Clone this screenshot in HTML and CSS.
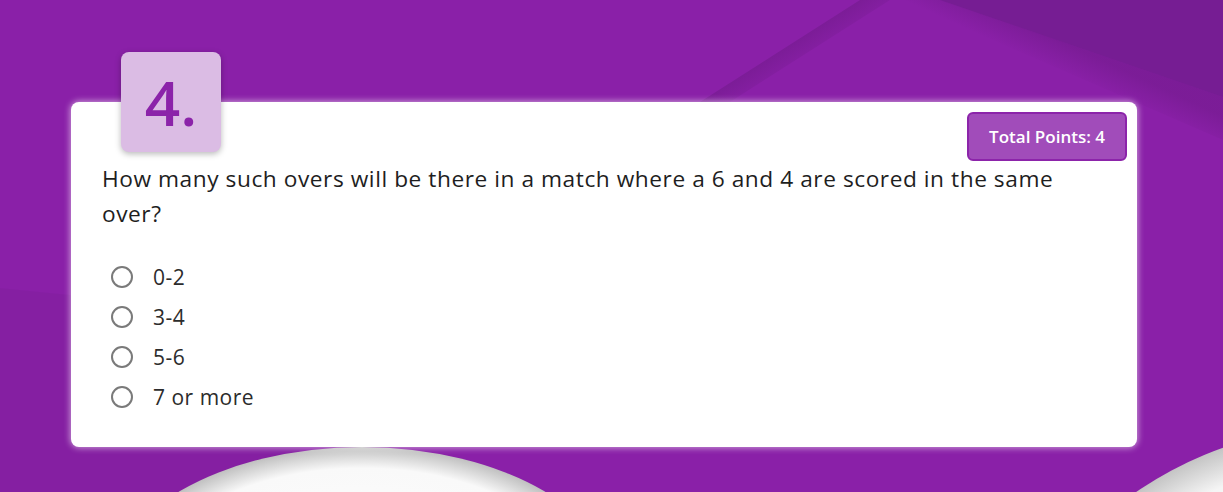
FILE: index.html
```html
<!DOCTYPE html>
<html lang="en">
<head>
<meta charset="utf-8">
<title>Quiz question</title>
<link rel="stylesheet" href="styles.css">
</head>
<body>
<svg class="bg" width="1223" height="492" viewBox="0 0 1223 492" aria-hidden="true">
  <defs>
    <linearGradient id="edgeShade" gradientUnits="userSpaceOnUse" x1="780" y1="51" x2="796" y2="76">
      <stop offset="0" stop-color="#5a1470" stop-opacity="0.3"/>
      <stop offset="1" stop-color="#5a1470" stop-opacity="0"/>
    </linearGradient>
    <linearGradient id="rightEdge" gradientUnits="userSpaceOnUse" x1="1080" y1="50" x2="1068" y2="76">
      <stop offset="0" stop-color="#5a1470" stop-opacity="0.3"/>
      <stop offset="1" stop-color="#5a1470" stop-opacity="0"/>
    </linearGradient>
    <radialGradient id="hill" cx="0.5" cy="0.5" r="0.5">
      <stop offset="0" stop-color="#ffffff"/>
      <stop offset="0.86" stop-color="#f9f9f9"/>
      <stop offset="1" stop-color="#c0c0c0"/>
    </radialGradient>
    <radialGradient id="hill2" cx="0.5" cy="0.5" r="0.5">
      <stop offset="0" stop-color="#ffffff"/>
      <stop offset="0.9" stop-color="#f5f5f5"/>
      <stop offset="1" stop-color="#c4c4c4"/>
    </radialGradient>
  </defs>
  <polygon points="700,102 860,0 890,0 730,102" fill="url(#edgeShade)"/>
  <polygon points="940,0 1223,0 1223,97" fill="#761d93"/>
  <polygon points="940,0 1223,97 1223,140 900,0" fill="url(#rightEdge)"/>
  <polygon points="0,288 300,318 300,492 0,492" fill="#000" opacity="0.03"/>
  <ellipse cx="362" cy="598" rx="258" ry="151" fill="url(#hill)"/>
  <circle cx="1345" cy="795" r="368" fill="url(#hill2)"/>
</svg>

<main class="card">
  <div class="card-head">
    <div class="qnum">4.</div>
    <div class="points">Total Points: 4</div>
  </div>
  <p class="question">How many such overs will be there in a match where a 6 and 4 are scored in the same over?</p>
  <ul class="options">
    <li class="option"><span class="radio"></span><span class="label">0-2</span></li>
    <li class="option"><span class="radio"></span><span class="label">3-4</span></li>
    <li class="option"><span class="radio"></span><span class="label">5-6</span></li>
    <li class="option"><span class="radio"></span><span class="label">7 or more</span></li>
  </ul>
</main>
</body>
</html>
```

FILE: styles.css
```css
html, body {
  margin: 0;
  padding: 0;
}

body {
  width: 1223px;
  height: 492px;
  overflow: hidden;
  background: #8a20a8;
  font-family: "Open Sans", "Noto Sans", sans-serif;
  position: relative;
  padding-top: 102px;
  box-sizing: border-box;
}

.bg {
  position: absolute;
  left: 0;
  top: 0;
  z-index: 0;
}

.card {
  position: relative;
  z-index: 1;
  margin-left: 71px;
  width: 1066px;
  height: 345px;
  box-sizing: border-box;
  padding: 10px 10px 0 31px;
  background: #ffffff;
  border-radius: 8px;
  box-shadow: 0 0 6px 1px rgba(255, 255, 255, 0.55);
}

.card-head {
  display: flex;
  justify-content: space-between;
  align-items: flex-start;
}

.qnum {
  width: 100px;
  height: 100px;
  margin-top: -60px;
  margin-left: 19px;
  border-radius: 8px;
  background: #dbbce4;
  color: #8b23a9;
  font-size: 62px;
  font-weight: 600;
  line-height: 100px;
  text-align: center;
  box-shadow: 0 2px 6px rgba(0, 0, 0, 0.28);
}

.points {
  height: 49px;
  box-sizing: border-box;
  padding: 0 20px;
  display: flex;
  align-items: center;
  background: #a14cba;
  border: 2px solid #8c24aa;
  border-radius: 6px;
  color: #ffffff;
  font-size: 17px;
  font-weight: 600;
}

.question {
  margin: 0;
  padding-right: 30px;
  font-size: 22.7px;
  letter-spacing: 0.55px;
  line-height: 35px;
  color: #1e1e1e;
}

.options {
  list-style: none;
  margin: 26px 0 0 0;
  padding: 0 0 0 9px;
}

.option {
  display: flex;
  align-items: center;
  height: 40px;
  gap: 20px;
}

.radio {
  width: 22px;
  height: 22px;
  box-sizing: border-box;
  border: 2px solid #7a7a7a;
  border-radius: 50%;
}

.label {
  font-size: 21px;
  letter-spacing: 0.5px;
  font-weight: 400;
  color: #2c2c2c;
}
```
